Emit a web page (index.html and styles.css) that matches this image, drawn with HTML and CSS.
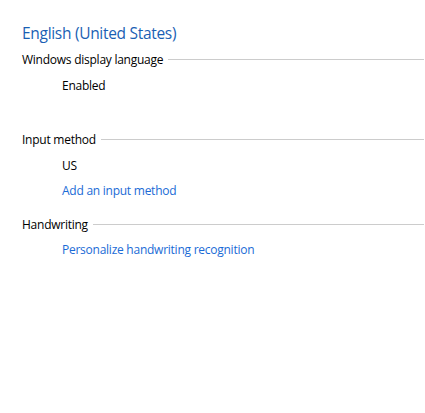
FILE: index.html
```html
<!DOCTYPE html>
<html lang="en">
<head>
<meta charset="utf-8">
<title>Language options</title>
<link rel="stylesheet" href="styles.css">
</head>
<body>
<div class="page">
  <h1 class="title">English (United States)</h1>
  <section class="section first">
    <div class="header"><span class="label">Windows display language</span><span class="rule"></span></div>
    <ul class="items">
      <li class="item">Enabled</li>
    </ul>
  </section>
  <section class="section">
    <div class="header"><span class="label">Input method</span><span class="rule"></span></div>
    <ul class="items">
      <li class="item">US</li>
      <li class="item"><a class="link" href="#">Add an input method</a></li>
    </ul>
  </section>
  <section class="section">
    <div class="header"><span class="label">Handwriting</span><span class="rule"></span></div>
    <ul class="items">
      <li class="item"><a class="link" href="#">Personalize handwriting recognition</a></li>
    </ul>
  </section>
</div>
</body>
</html>
```

FILE: styles.css
```css
html, body {
  margin: 0;
  padding: 0;
  background: #ffffff;
}
body {
  font-family: "Open Sans", "Noto Sans", "Liberation Sans", sans-serif;
  color: #000000;
}
.page {
  padding: 22px 1px 0 22px;
}
.title {
  margin: 0;
  font-size: 15.5px;
  font-weight: 400;
  line-height: 22px;
  letter-spacing: -0.3px;
  color: #1a5fb4;
}
.section {
  margin-top: 12px;
}
.section.first {
  margin-top: 6px;
}
.section.first .items {
  padding-bottom: 20px;
}
.header {
  display: flex;
  align-items: center;
  height: 20px;
  font-size: 12px;
  line-height: 20px;
  letter-spacing: -0.25px;
}
.label {
  white-space: nowrap;
}
.rule {
  flex: 1;
  height: 0;
  border-top: 1px solid #cccccc;
  margin-left: 5px;
  margin-bottom: 2px;
}
.items {
  list-style: none;
  margin: 3px 0 0 0;
  padding: 0 0 0 40px;
}
.item {
  font-size: 12px;
  line-height: 25px;
  height: 25px;
  letter-spacing: -0.25px;
}
.section:last-child .items {
  margin-top: 2px;
}
.link {
  color: #1a6bd6;
  text-decoration: none;
}
```
